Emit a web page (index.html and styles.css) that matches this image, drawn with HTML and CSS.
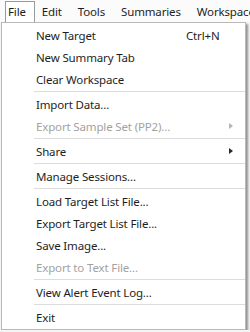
FILE: index.html
```html
<!DOCTYPE html>
<html lang="en">
<head>
<meta charset="UTF-8" />
<title>File menu</title>
<link rel="stylesheet" href="styles.css">
</head>
<body>
  <div class="menubar">
    <span class="menubar-item open">File</span>
    <span class="menubar-item">Edit</span>
    <span class="menubar-item">Tools</span>
    <span class="menubar-item">Summaries</span>
    <span class="menubar-item">Workspace</span>
  </div>

  <div class="dropdown">
    <div class="item"><span>New Target</span><span class="shortcut">Ctrl+N</span></div>
    <div class="item"><span>New Summary Tab</span></div>
    <div class="item"><span>Clear Workspace</span></div>
    <div class="sep"></div>
    <div class="item"><span>Import Data...</span></div>
    <div class="item disabled"><span>Export Sample Set (PP2)...</span><span></span><span class="arrow"></span></div>
    <div class="sep"></div>
    <div class="item"><span>Share</span><span></span><span class="arrow"></span></div>
    <div class="sep"></div>
    <div class="item"><span>Manage Sessions...</span></div>
    <div class="sep"></div>
    <div class="item"><span>Load Target List File...</span></div>
    <div class="item"><span>Export Target List File...</span></div>
    <div class="item"><span>Save Image...</span></div>
    <div class="item disabled"><span>Export to Text File...</span></div>
    <div class="sep"></div>
    <div class="item"><span>View Alert Event Log...</span></div>
    <div class="sep"></div>
    <div class="item"><span>Exit</span></div>
  </div>
</body>
</html>
```

FILE: styles.css
```css
body {
  margin: 0;
  font-family: "Segoe UI", "Noto Sans", sans-serif;
  font-size: 11.5px;
  letter-spacing: -0.15px;
  background: #f4f4f4;
  color: #1e1e1e;
  overflow: hidden;
}
.menubar {
  display: flex;
  height: 22px;
  padding-left: 5px;
  background: #fbfbfb;
  white-space: nowrap;
  overflow: hidden;
}
.menubar-item {
  margin-top: 1px;
  margin-right: 4px;
  padding: 0 8px 0 2px;
  line-height: 20px;
  border: 1px solid transparent;
  border-bottom: none;
}
.menubar-item.open {
  border-color: #9a9a9a;
  background: #fff;
}
.dropdown {
  width: 243px;
  margin-left: 1px;
  padding: 1px 0;
  background: #fff;
  border: 1px solid #b9b9b9;
  box-shadow: 2px 2px 2px rgba(0, 0, 0, 0.4);
}
.item {
  display: grid;
  grid-template-columns: 150px 1fr 16px;
  align-items: center;
  height: 22px;
  padding-left: 34px;
  white-space: nowrap;
}
.item.disabled {
  color: #a2a2a2;
}
.arrow {
  width: 0;
  height: 0;
  border-top: 3.5px solid transparent;
  border-bottom: 3.5px solid transparent;
  border-left: 4px solid #2a2a2a;
}
.disabled .arrow {
  border-left-color: #b4b4b4;
}
.sep {
  height: 1px;
  margin: 1px 0 1px 32px;
  background: #dcdcdc;
}
```
